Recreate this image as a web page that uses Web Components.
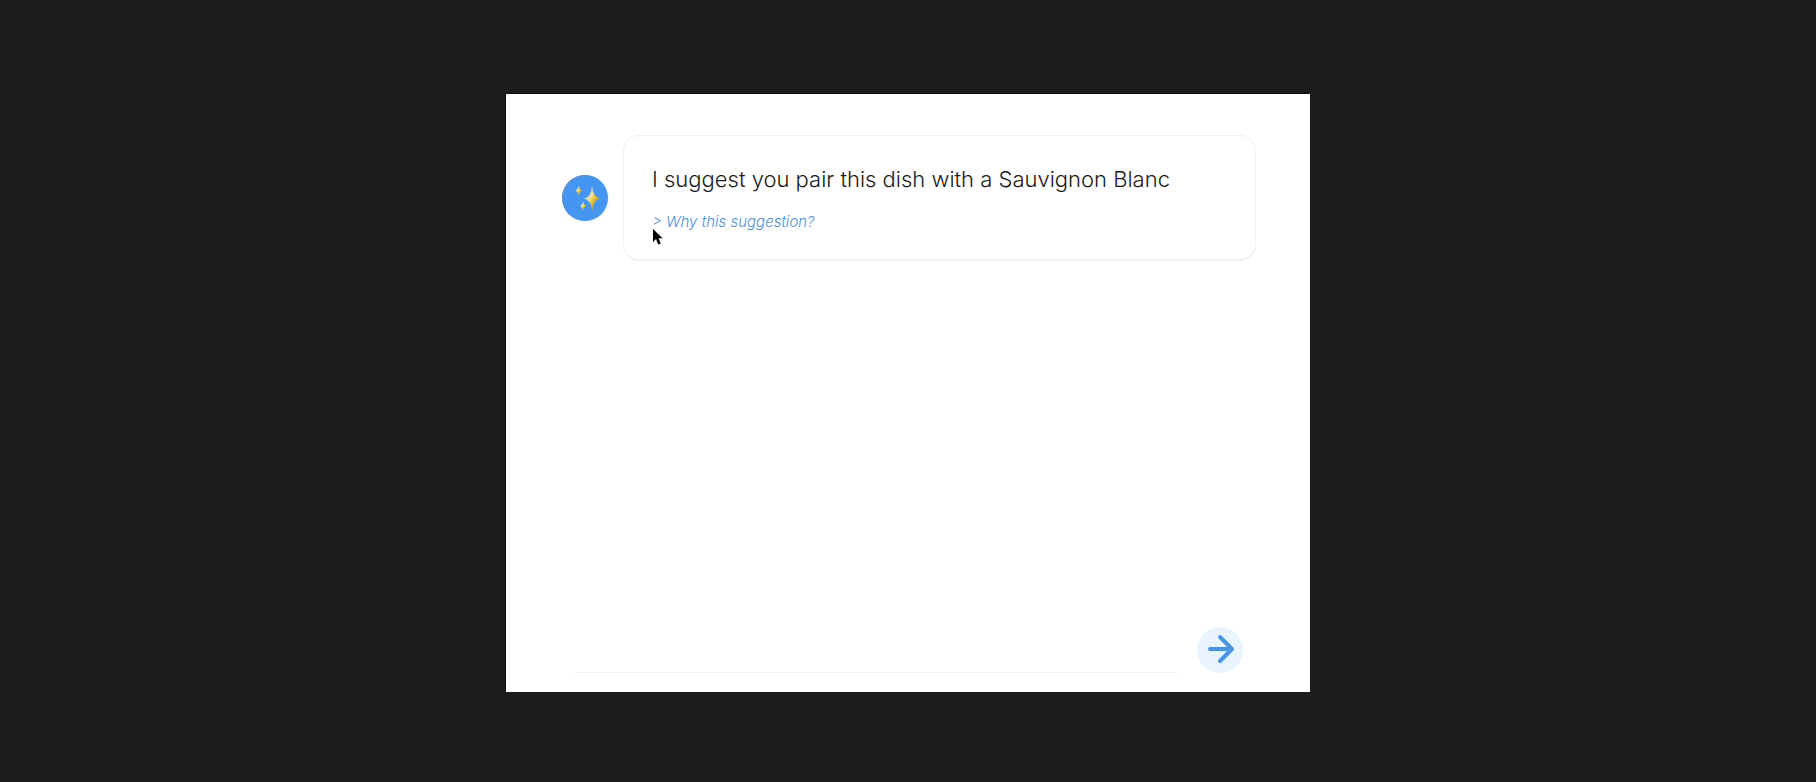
<!DOCTYPE html>
<html lang="en">
<head>
<meta charset="utf-8">
<meta name="viewport" content="width=device-width, initial-scale=1">
<title>Pairing assistant</title>
<style>
    body{
        margin: 0;
        background-color: #1c1c1c;
        font-family: Inter, "Open Sans", sans-serif;
        font-weight: 300;
        color: #1b1b1b;
    }
</style>
</head>
<body>
<chat-window>
    <chat-message>
        I suggest you pair this dish with a Sauvignon Blanc
        <why-toggle slot="more">Why this suggestion?</why-toggle>
    </chat-message>
    <chat-composer slot="footer"></chat-composer>
</chat-window>

<script>
class ChatWindow extends HTMLElement {

    constructor() {
        super();
        this.shadow = this.attachShadow({ mode: 'open' });
    }

    connectedCallback() {
        this.render();
    }

    render() {
        this.shadow.innerHTML =
        `
        <style>
            :host{
                box-sizing: border-box;
                display: flex;
                justify-content: center;
                min-height: 100vh;
                padding: 94px 16px 90px;
            }
            main{
                background-color: white;
                box-shadow: -1px -1px 0 #0c0c0c;
                box-sizing: border-box;
                display: flex;
                flex: 1;
                flex-direction: column;
                justify-content: space-between;
                max-width: 804px;
                padding: 41px 54px 19px 56px;
            }
        </style>
        <main>
            <slot></slot>
            <slot name="footer"></slot>
        </main>`;
    }
}
customElements.define('chat-window', ChatWindow);

class SparkleAvatar extends HTMLElement {

    constructor() {
        super();
        this.shadow = this.attachShadow({ mode: 'open' });
    }

    connectedCallback() {
        this.render();
    }

    render() {
        this.shadow.innerHTML =
        `
        <style>
            :host{
                background-color: #4595f3;
                border-radius: 50%;
                box-shadow: inset 1px 1px 1px #6f8fb5, 1px 1px 2px #dcf6ff;
                display: block;
                flex: none;
                height: 46px;
                width: 46px;
            }
            svg{
                display: block;
            }
        </style>
        <svg width="46" height="46" viewBox="0 0 46 46" aria-hidden="true">
            <defs>
                <linearGradient id="gold" x1="0" y1="0" x2="1" y2="1">
                    <stop offset="0.25" stop-color="#b9cfdc"/>
                    <stop offset="0.42" stop-color="#efe0a0"/>
                    <stop offset="0.55" stop-color="#e8c42c"/>
                    <stop offset="0.8" stop-color="#85825f"/>
                </linearGradient>
            </defs>
            <g fill="url(#gold)">
                <path d="M30 10.500 Q30.800 22 38.500 23.500 Q31.200 25 30.500 37 Q29.200 25 22 23.500 Q29.200 22 30 10.500Z"/>
                <path d="M16.500 10 Q17.100 14.900 20.500 15.500 Q17.300 16.200 17 22 Q16.100 16.200 13 15.500 Q16 14.900 16.500 10Z"/>
                <path d="M21 26 Q21.600 30.500 25 31 Q21.800 31.600 21.500 37 Q20.600 31.600 17.500 31 Q20.500 30.500 21 26Z"/>
            </g>
        </svg>`;
    }
}
customElements.define('sparkle-avatar', SparkleAvatar);

class ChatMessage extends HTMLElement {

    constructor() {
        super();
        this.shadow = this.attachShadow({ mode: 'open' });
    }

    connectedCallback() {
        this.render();
    }

    render() {
        this.shadow.innerHTML =
        `
        <style>
            :host{
                align-items: center;
                display: flex;
                gap: 15px;
            }
            article{
                border: 1px solid #f1f1f1;
                border-bottom-width: 2px;
                border-radius: 16px;
                box-sizing: border-box;
                flex: 1;
                padding: 27px 28px;
            }
            p{
                font-size: 22px;
                line-height: 32px;
                margin: 0 0 17px;
            }
        </style>
        <sparkle-avatar></sparkle-avatar>
        <article>
            <p><slot></slot></p>
            <slot name="more"></slot>
        </article>`;
    }
}
customElements.define('chat-message', ChatMessage);

class WhyToggle extends HTMLElement {

    constructor() {
        super();
        this.shadow = this.attachShadow({ mode: 'open' });
    }

    connectedCallback() {
        this.render();
    }

    render() {
        this.shadow.innerHTML =
        `
        <style>
            :host{
                display: flex;
                position: relative;
            }
            button{
                background: none;
                border: 0;
                color: #4f90d3;
                cursor: pointer;
                font: italic 300 15px/20px Inter, "Open Sans", sans-serif;
                padding: 0;
            }
            /* pointer lies over the start of the link */
            svg{
                left: 0;
                pointer-events: none;
                position: absolute;
                top: 16px;
            }
        </style>
        <button type="button">&gt; <slot></slot></button>
        <svg width="12" height="18" viewBox="0 0 12 18" aria-hidden="true">
            <path d="M1 1 V14 L4 11 L6.300 16.500 L8.700 15.500 L6.500 10.200 H10.500 Z" fill="black" stroke="#e4e4e4" stroke-width="1" paint-order="stroke"/>
        </svg>`;
    }
}
customElements.define('why-toggle', WhyToggle);

class ChatComposer extends HTMLElement {

    constructor() {
        super();
        this.shadow = this.attachShadow({ mode: 'open' });
    }

    connectedCallback() {
        this.render();
    }

    render() {
        this.shadow.innerHTML =
        `
        <style>
            :host{
                display: block;
            }
            form{
                align-items: flex-end;
                display: flex;
                gap: 19px;
                margin: 0 13px;
            }
            input{
                background: none;
                border: 0;
                border-bottom: 1px solid #f1f1f1;
                box-sizing: border-box;
                color: inherit;
                flex: 1;
                font: inherit;
                height: 46px;
                min-width: 0;
                outline: 0;
                padding: 0;
            }
            button{
                background-color: #eaf4fe;
                border: 0;
                border-radius: 50%;
                cursor: pointer;
                height: 46px;
                padding: 0;
                width: 46px;
            }
            svg{
                display: block;
            }
        </style>
        <form>
            <input type="text" aria-label="Message">
            <button type="button" aria-label="Send">
                <svg width="46" height="46" viewBox="0 0 46 46" fill="none" stroke-width="4" stroke-linecap="round" stroke-linejoin="round" aria-hidden="true">
                    <path d="M14 23 H35 M24 11 L35 23 L24 35" stroke="#c9f0ff"/>
                    <path d="M13 22 H35 M23 10 L35 22 L23 34" stroke="#4c94e2"/>
                </svg>
            </button>
        </form>`;
    }
}
customElements.define('chat-composer', ChatComposer);
</script>
</body>
</html>
